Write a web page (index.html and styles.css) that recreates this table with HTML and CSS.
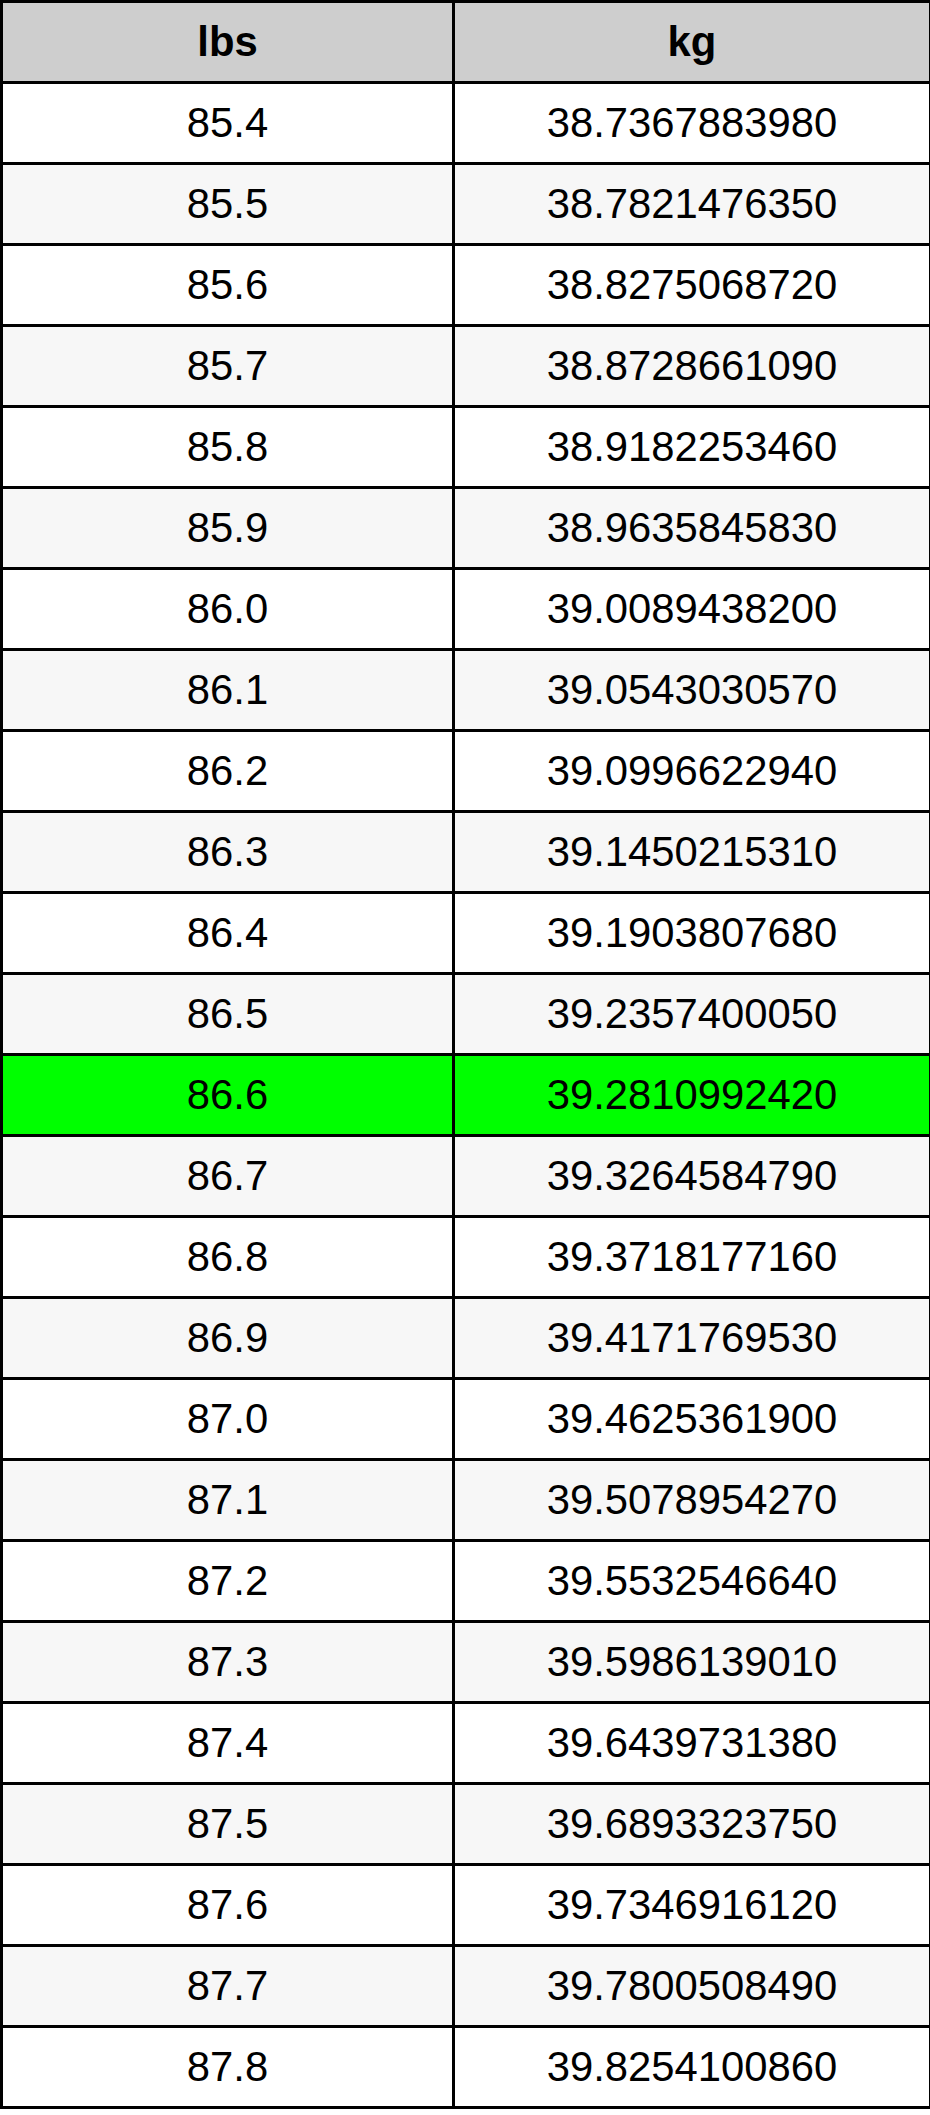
FILE: index.html
```html
<!DOCTYPE html>
<html lang="en">
<head>
<meta charset="utf-8">
<title>lbs to kg</title>
<link rel="stylesheet" href="styles.css">
</head>
<body>
<table class="conv">
<colgroup><col class="c-lbs"><col class="c-kg"></colgroup>
<thead>
<tr><th>lbs</th><th>kg</th></tr>
</thead>
<tbody>
<tr><td>85.4</td><td>38.7367883980</td></tr>
<tr><td>85.5</td><td>38.7821476350</td></tr>
<tr><td>85.6</td><td>38.8275068720</td></tr>
<tr><td>85.7</td><td>38.8728661090</td></tr>
<tr><td>85.8</td><td>38.9182253460</td></tr>
<tr><td>85.9</td><td>38.9635845830</td></tr>
<tr><td>86.0</td><td>39.0089438200</td></tr>
<tr><td>86.1</td><td>39.0543030570</td></tr>
<tr><td>86.2</td><td>39.0996622940</td></tr>
<tr><td>86.3</td><td>39.1450215310</td></tr>
<tr><td>86.4</td><td>39.1903807680</td></tr>
<tr><td>86.5</td><td>39.2357400050</td></tr>
<tr class="hl"><td>86.6</td><td>39.2810992420</td></tr>
<tr><td>86.7</td><td>39.3264584790</td></tr>
<tr><td>86.8</td><td>39.3718177160</td></tr>
<tr><td>86.9</td><td>39.4171769530</td></tr>
<tr><td>87.0</td><td>39.4625361900</td></tr>
<tr><td>87.1</td><td>39.5078954270</td></tr>
<tr><td>87.2</td><td>39.5532546640</td></tr>
<tr><td>87.3</td><td>39.5986139010</td></tr>
<tr><td>87.4</td><td>39.6439731380</td></tr>
<tr><td>87.5</td><td>39.6893323750</td></tr>
<tr><td>87.6</td><td>39.7346916120</td></tr>
<tr><td>87.7</td><td>39.7800508490</td></tr>
<tr><td>87.8</td><td>39.8254100860</td></tr>
</tbody>
</table>
</body>
</html>
```
FILE: styles.css
```css
html, body {
  margin: 0;
  padding: 0;
  background: #ffffff;
}
.conv {
  width: 929px;
  border-collapse: collapse;
  table-layout: fixed;
  font-family: "Liberation Sans", Arial, sans-serif;
  font-size: 41.8px;
  color: #000000;
}
.c-lbs { width: 452px; }
.c-kg { width: 477px; }
.conv th,
.conv td {
  border: 3px solid #000000;
  height: 81px;
  padding: 0;
  text-align: center;
  vertical-align: middle;
  box-sizing: border-box;
}
.conv th {
  background: #cecece;
  font-weight: bold;
}
.conv tbody tr:nth-child(even) td {
  background: #f7f7f7;
}
.conv tbody tr.hl td {
  background: #00ff00;
}
```
